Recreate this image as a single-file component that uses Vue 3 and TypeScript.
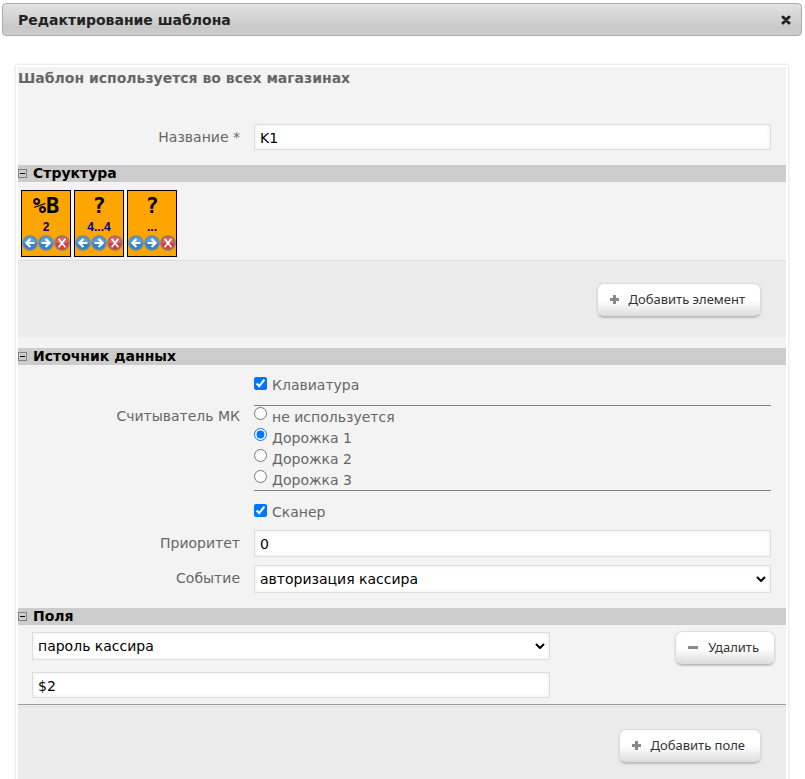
<script setup lang="ts">
import { ref } from 'vue'

interface Tile {
  id: number
  symbol: string
  range: string
}

const name = ref('K1')
const tiles = ref<Tile[]>([
  { id: 1, symbol: '%B', range: '2' },
  { id: 2, symbol: '?', range: '4...4' },
  { id: 3, symbol: '?', range: '...' },
])
const keyboard = ref(true)
const scanner = ref(true)
const tracks = ['не используется', 'Дорожка 1', 'Дорожка 2', 'Дорожка 3']
const track = ref('Дорожка 1')
const priority = ref('0')
const eventName = ref('авторизация кассира')
const fieldType = ref('пароль кассира')
const fieldValue = ref('$2')

function move(index: number, step: number) {
  const target = index + step
  if (target < 0 || target >= tiles.value.length) return
  const [tile] = tiles.value.splice(index, 1)
  tiles.value.splice(target, 0, tile)
}
function remove(index: number) {
  tiles.value.splice(index, 1)
}
</script>

<template>
  <main class="dialog">
    <header class="titlebar">
      <h1>Редактирование шаблона</h1>
      <button class="close" type="button" aria-label="Закрыть">
        <svg width="10" height="10" viewBox="0 0 10 10"><path d="M2 2l6 6M8 2l-6 6" stroke="#222" stroke-width="3" stroke-linecap="round" /></svg>
      </button>
    </header>

    <form class="panel" @submit.prevent>
      <p class="notice">Шаблон используется во всех магазинах</p>

      <div class="row name-row">
        <label class="label" for="name">Название *</label>
        <input id="name" v-model="name" class="control" type="text" />
      </div>

      <h2 class="section"><span class="toggle"></span>Структура</h2>
      <div class="tiles">
        <div v-for="(tile, i) in tiles" :key="tile.id" class="tile">
          <span class="symbol">{{ tile.symbol }}</span>
          <span class="range">{{ tile.range }}</span>
          <div class="tools">
            <button type="button" aria-label="Влево" @click="move(i, -1)">
              <svg width="16" height="16" viewBox="0 0 16 16"><circle cx="8" cy="8" r="7.3" fill="#2f83cb" stroke="#8b8f8c" stroke-width="1.4" /><path d="M2 8a6 6 0 0 1 12 0z" fill="#5ba2dc" /><path d="M12.4 8H5M8.4 4L4.4 8L8.4 12" fill="none" stroke="#fff" stroke-width="2.2" /></svg>
            </button>
            <button type="button" aria-label="Вправо" @click="move(i, 1)">
              <svg width="16" height="16" viewBox="0 0 16 16"><circle cx="8" cy="8" r="7.3" fill="#2f83cb" stroke="#8b8f8c" stroke-width="1.4" /><path d="M2 8a6 6 0 0 1 12 0z" fill="#5ba2dc" /><path d="M3.6 8H11M7.6 4L11.6 8L7.6 12" fill="none" stroke="#fff" stroke-width="2.2" /></svg>
            </button>
            <button type="button" aria-label="Убрать" @click="remove(i)">
              <svg width="16" height="16" viewBox="0 0 16 16"><circle cx="8" cy="8" r="7.3" fill="#d63c3c" stroke="#98857c" stroke-width="1.4" /><path d="M2 8a6 6 0 0 1 12 0z" fill="#de6563" /><path d="M4.6 3.8l6.8 8.4M11.4 3.8l-6.8 8.4" fill="none" stroke="#fff" stroke-width="1.8" /></svg>
            </button>
          </div>
        </div>
      </div>
      <div class="footer">
        <button class="btn" type="button">
          <svg width="9" height="9" viewBox="0 0 9 9"><path d="M3 0h3v3h3v3H6v3H3V6H0V3h3z" fill="#888" /></svg>
          Добавить элемент
        </button>
      </div>

      <h2 class="section source-head"><span class="toggle"></span>Источник данных</h2>
      <div class="source">
        <div class="row">
          <span></span>
          <label class="choice check"><input v-model="keyboard" type="checkbox" /><span>Клавиатура</span></label>
        </div>
        <div class="row">
          <span id="reader" class="label reader">Считыватель МК</span>
          <div class="radios" role="radiogroup" aria-labelledby="reader">
            <label v-for="t in tracks" :key="t" class="choice"><input v-model="track" type="radio" name="track" :value="t" /><span>{{ t }}</span></label>
          </div>
        </div>
        <div class="row">
          <span></span>
          <label class="choice check scanner"><input v-model="scanner" type="checkbox" /><span>Сканер</span></label>
        </div>
        <div class="row field">
          <label class="label" for="priority">Приоритет</label>
          <input id="priority" v-model="priority" class="control" type="text" />
        </div>
        <div class="row field">
          <label class="label" for="event">Событие</label>
          <div class="picker">
            <select id="event" v-model="eventName" class="control"><option>авторизация кассира</option></select>
            <svg class="chevron" width="10" height="6" viewBox="0 0 10 6"><path d="M1 1l4 4l4-4" fill="none" stroke="#000" stroke-width="2" /></svg>
          </div>
        </div>
      </div>

      <h2 class="section"><span class="toggle"></span>Поля</h2>
      <div class="fields">
        <div class="inputs">
          <div class="picker">
            <select v-model="fieldType" class="control" aria-label="Тип поля"><option>пароль кассира</option></select>
            <svg class="chevron" width="10" height="6" viewBox="0 0 10 6"><path d="M1 1l4 4l4-4" fill="none" stroke="#000" stroke-width="2" /></svg>
          </div>
          <input v-model="fieldValue" class="control" type="text" aria-label="Значение поля" />
        </div>
        <button class="btn" type="button">
          <svg width="10" height="9" viewBox="0 0 10 9"><path d="M0 3h10v3H0z" fill="#888" /></svg>
          Удалить
        </button>
      </div>
      <div class="footer last">
        <button class="btn" type="button">
          <svg width="9" height="9" viewBox="0 0 9 9"><path d="M3 0h3v3h3v3H6v3H3V6H0V3h3z" fill="#888" /></svg>
          Добавить поле
        </button>
      </div>
    </form>
  </main>
</template>

<style>
body {
  background: #fff;
  overflow: hidden;
}
</style>

<style scoped>
* {
  box-sizing: border-box;
}
.dialog {
  padding: 3px 3px 0 2px;
  font: 14px/20px Verdana, "DejaVu Sans", sans-serif;
  color: #666;
}
.titlebar {
  display: flex;
  align-items: center;
  justify-content: space-between;
  height: 33px;
  padding: 0 10px 0 15px;
  border: 1px solid #aaa;
  border-radius: 4px;
  background: linear-gradient(#e2e2e2, #c9c9c9 75%, #ccc);
}
h1 {
  margin: 0;
  font-size: 14px;
  line-height: 20px;
  color: #222;
}
button {
  cursor: pointer;
}
.close,
.tools button {
  display: block;
  padding: 0;
  border: 0;
  background: none;
}
svg {
  display: block;
}
.panel {
  margin: 29px 14px 0;
  border: 2px solid #fff;
  background: #f3f3f3;
  box-shadow: 0 0 3px rgba(0, 0, 0, 0.2);
}
.notice {
  margin: 0;
  padding-top: 1px;
  font-weight: bold;
}
.row {
  display: grid;
  grid-template-columns: 222px 1fr;
  column-gap: 14px;
  padding-right: 15px;
}
.label {
  text-align: right;
}
.name-row {
  padding-top: 36px;
  padding-bottom: 15px;
}
.name-row .label {
  padding-top: 3px;
}
.control {
  display: block;
  width: 100%;
  height: 26px;
  margin: 0;
  padding: 1px 5px 0;
  border: 1px solid #ddd;
  border-radius: 0;
  outline: none;
  background: #fff;
  box-shadow: inset 0 0 4px rgba(0, 0, 0, 0.08);
  font: inherit;
  color: #000;
}
select.control {
  height: 28px;
  padding-top: 0;
  appearance: none;
}
.picker {
  position: relative;
}
.chevron {
  position: absolute;
  right: 5px;
  top: 11px;
  pointer-events: none;
}
.section {
  display: flex;
  align-items: center;
  gap: 6px;
  height: 17px;
  margin: 0;
  background: #ccc;
  font-size: 14px;
  line-height: 19px;
  color: #000;
}
.toggle {
  display: grid;
  place-items: center;
  width: 9px;
  height: 9px;
  border: 1px solid #808080;
}
.toggle::before {
  content: "";
  width: 5px;
  height: 1px;
  background: #000;
}
.tiles {
  display: flex;
  gap: 3px;
  padding: 8px 3px 3px;
}
.tile {
  display: flex;
  flex-direction: column;
  align-items: center;
  width: 50px;
  height: 67px;
  border: 1px solid #000;
  background: orange;
  color: #000;
}
.symbol {
  font: bold 22px/29px "DejaVu Sans Mono", monospace;
}
.range {
  font: bold 12px/14px "Liberation Sans", sans-serif;
  color: #000080;
}
.tools {
  display: flex;
  padding-top: 1px;
}
.footer {
  display: flex;
  justify-content: flex-end;
  height: 77px;
  padding: 22px 25px 0 0;
  border-top: 1px solid #ddd;
  background: #ebebeb;
}
.last {
  height: 90px;
}
.btn {
  display: flex;
  align-items: center;
  gap: 10px;
  height: 34px;
  padding: 0 15px 2px 12px;
  border: 1px solid #ddd;
  border-bottom-color: #bbb;
  border-radius: 7px;
  background: linear-gradient(#fff 50%, #ddd);
  box-shadow: 0 1px 2px rgba(0, 0, 0, 0.2);
  font: 13px/20px "Noto Sans", "Open Sans", sans-serif;
  color: #333;
  white-space: nowrap;
}
.source-head {
  margin-top: 11px;
}
.source {
  padding: 9px 0 15px;
}
.choice {
  display: flex;
  gap: 5px;
  height: 21px;
}
.choice span {
  padding-top: 1px;
}
.choice input {
  flex: none;
  width: 13px;
  height: 13px;
  margin: 1px 0 0;
}
.check {
  height: 31px;
}
.check input {
  margin-top: 3px;
}
.scanner {
  height: 29px;
}
.reader {
  padding-top: 1px;
}
.radios {
  border-top: 1px solid #808080;
  border-bottom: 1px solid #808080;
  margin-bottom: 10px;
}
.field {
  padding-bottom: 8px;
}
.field .control {
  height: 27px;
}
.field select.control {
  height: 28px;
}
.field .label {
  padding-top: 3px;
}
.field:last-child {
  padding-bottom: 0;
}
.fields {
  display: flex;
  justify-content: space-between;
  align-items: flex-start;
  padding: 7px 11px 6px 14px;
  border-bottom: 1px solid #999;
  margin-bottom: 1px;
}
.inputs {
  display: grid;
  gap: 12px;
  width: 70%;
  max-width: 518px;
}
.fields .btn {
  margin-top: -1px;
}
</style>
